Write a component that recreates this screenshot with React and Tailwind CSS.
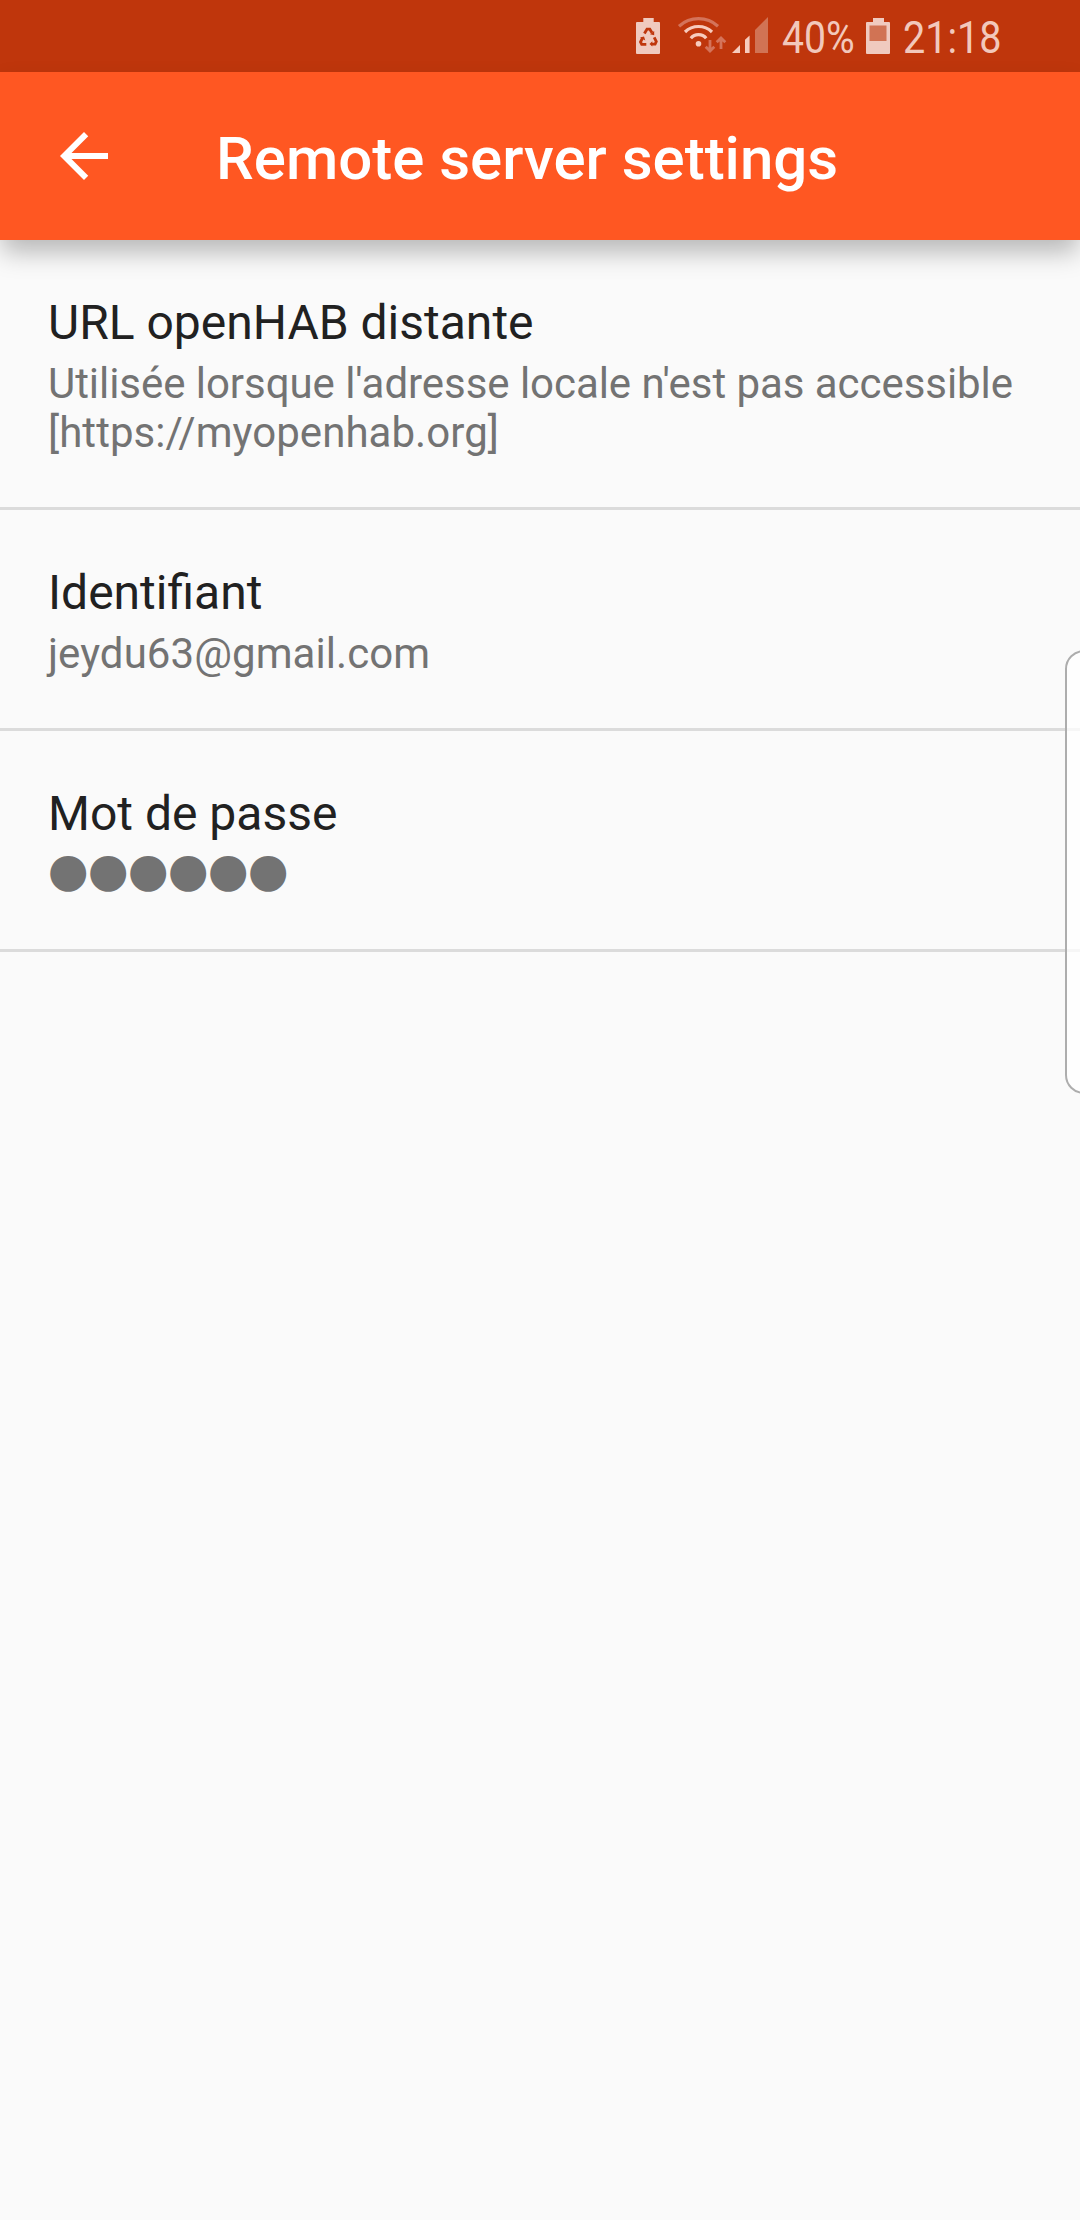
import React from 'react';

const SETTINGS = [
    {
        title: 'URL openHAB distante',
        summary: [
            { text: "Utilisée lorsque l'adresse locale n'est pas accessible", tracking: 'tracking-[-0.05px]' },
            { text: '[https://myopenhab.org]', tracking: 'tracking-[0.05px]' }
        ]
    },
    {
        title: 'Identifiant',
        summary: [{ text: 'jeydu63@gmail.com', tracking: 'tracking-[0.07px]' }]
    },
    { title: 'Mot de passe', secret: '●●●●●●' }
];

const StatusIcons = () => (
    <svg width="136" height="72" viewBox="636 0 136 72" className="shrink-0" fill="#f0cabf">
        {/* Battery with recycle mark */}
        <path d="M643.3 18h10.4v4h5.3q1 0 1 1v30q0 1-1 1h-22q-1 0-1-1V23q0-1 1-1h6.3z" />
        <g fill="none" stroke="#bf360c" strokeWidth="2.8">
            <path d="M644.4 33.4l2.6-4.2h2.8l2.2 3.6" />
            <path d="M654.2 37.4l2.1 4.2-1.2 2.5h-3.6" />
            <path d="M646.3 44.3h-4.6l-1.2-2.3 2-4" />
        </g>
        <g fill="#bf360c">
            <path d="M650 34.2l4.2 1V31z" />
            <path d="M652.3 41.3v5.2l-2.8-2.5z" />
            <path d="M640 37.4l4-0.8 1.3 4z" />
        </g>
        {/* Wifi */}
        <g fill="none" stroke="#f7cbbd" strokeWidth="3.2">
            <path d="M679 26.2a29 29 0 0 1 39 0" stroke="#d4735a" />
            <path d="M685 32a19.3 19.3 0 0 1 27 0" />
            <path d="M690.8 38.2a10 10 0 0 1 15.4 0" />
        </g>
        <circle cx="698.5" cy="43.7" r="2.8" fill="#f7cbbd" />
        <g fill="none" stroke="#d4735a" strokeWidth="2.8">
            <path d="M710 40v11M705.7 46.8l4.3 4.3 4.3-4.3" />
            <path d="M721 49V38M716.7 42.3l4.3-4.3 4.3 4.3" />
        </g>
        {/* Signal */}
        <path d="M732 53l8-8v8zM745 39.8l4.6-4.3V53H745z" fill="#f7cbbd" />
        <path d="M755 30l13-13v36h-13z" fill="#d17354" />
    </svg>
);

const BatteryIcon = () => (
    <svg width="24" height="36" viewBox="0 0 24 36" className="shrink-0">
        <path d="M7 0h11v4h5q1 0 1 1v30q0 1-1 1H1q-1 0-1-1V5q0-1 1-1h6z" fill="#f0cabf" />
        <path d="M3.5 7.500h17V23h-17z" fill="#d17354" />
    </svg>
);

const StatusBar = () => (
    <div className="flex h-[72px] items-center bg-[#bf360c] pl-[636px] text-[45px] leading-[72px] text-[#f2c8bb]">
        <StatusIcons />
        <div className="ml-[10px] w-[84px] shrink-0 pt-[3px] whitespace-nowrap">
            <span className="inline-block origin-left scale-x-[0.87]">40%</span>
        </div>
        <BatteryIcon />
        <div className="ml-[12.5px] w-[110px] shrink-0 pt-[3px] whitespace-nowrap">
            <span className="inline-block origin-left scale-x-[0.88]">21:18</span>
        </div>
    </div>
);

const AppBar = () => (
    <header className="relative flex h-[168px] items-center bg-[#ff5722] pl-[48px] text-white shadow-[0_14px_24px_-2px_rgba(0,0,0,0.27)]">
        <button className="size-[72px]" aria-label="Retour">
            <svg viewBox="0 0 24 24" className="size-[72px]" fill="currentColor">
                <path d="M20 11H7.83l5.59-5.59L12 4l-8 8 8 8 1.41-1.41L7.83 13H20v-2z" />
            </svg>
        </button>
        <h1 className="ml-[96px] pt-[5px] text-[60px] leading-[71px] font-medium">Remote server settings</h1>
    </header>
);

const SettingRow = ({ title, summary, secret }) => (
    <div className="border-b-[3px] border-[#dbdbdb] px-[48px] pt-[54px] pb-[50px]">
        <div className="h-[65px] text-[48px] leading-[57px] text-[#212121]">{title}</div>
        {secret ? (
            <div className="-ml-[0.5px] h-[49px] font-['DejaVu_Sans'] text-[47px] leading-[40px] tracking-[-1px] text-[#737373]">
                {secret}
            </div>
        ) : (
            summary.map(({ text, tracking }) => (
                <div key={text} className={`text-[42px] leading-[49px] whitespace-nowrap text-[#737373] ${tracking}`}>
                    {text}
                </div>
            ))
        )}
    </div>
);

const App = () => {
    return (
        <div className="relative h-[2220px] w-[1080px] overflow-hidden bg-[#fafafa] font-[Roboto,sans-serif]">
            <StatusBar />
            <AppBar />
            <main>
                {SETTINGS.map((item) => (
                    <SettingRow key={item.title} {...item} />
                ))}
            </main>
            {/* Edge panel handle, runs off the right side */}
            <div className="absolute top-[650px] -right-[10px] h-[444px] w-[25px] rounded-l-[19px] border-2 border-[#adadad] bg-white/75" />
        </div>
    );
};

export default App;
